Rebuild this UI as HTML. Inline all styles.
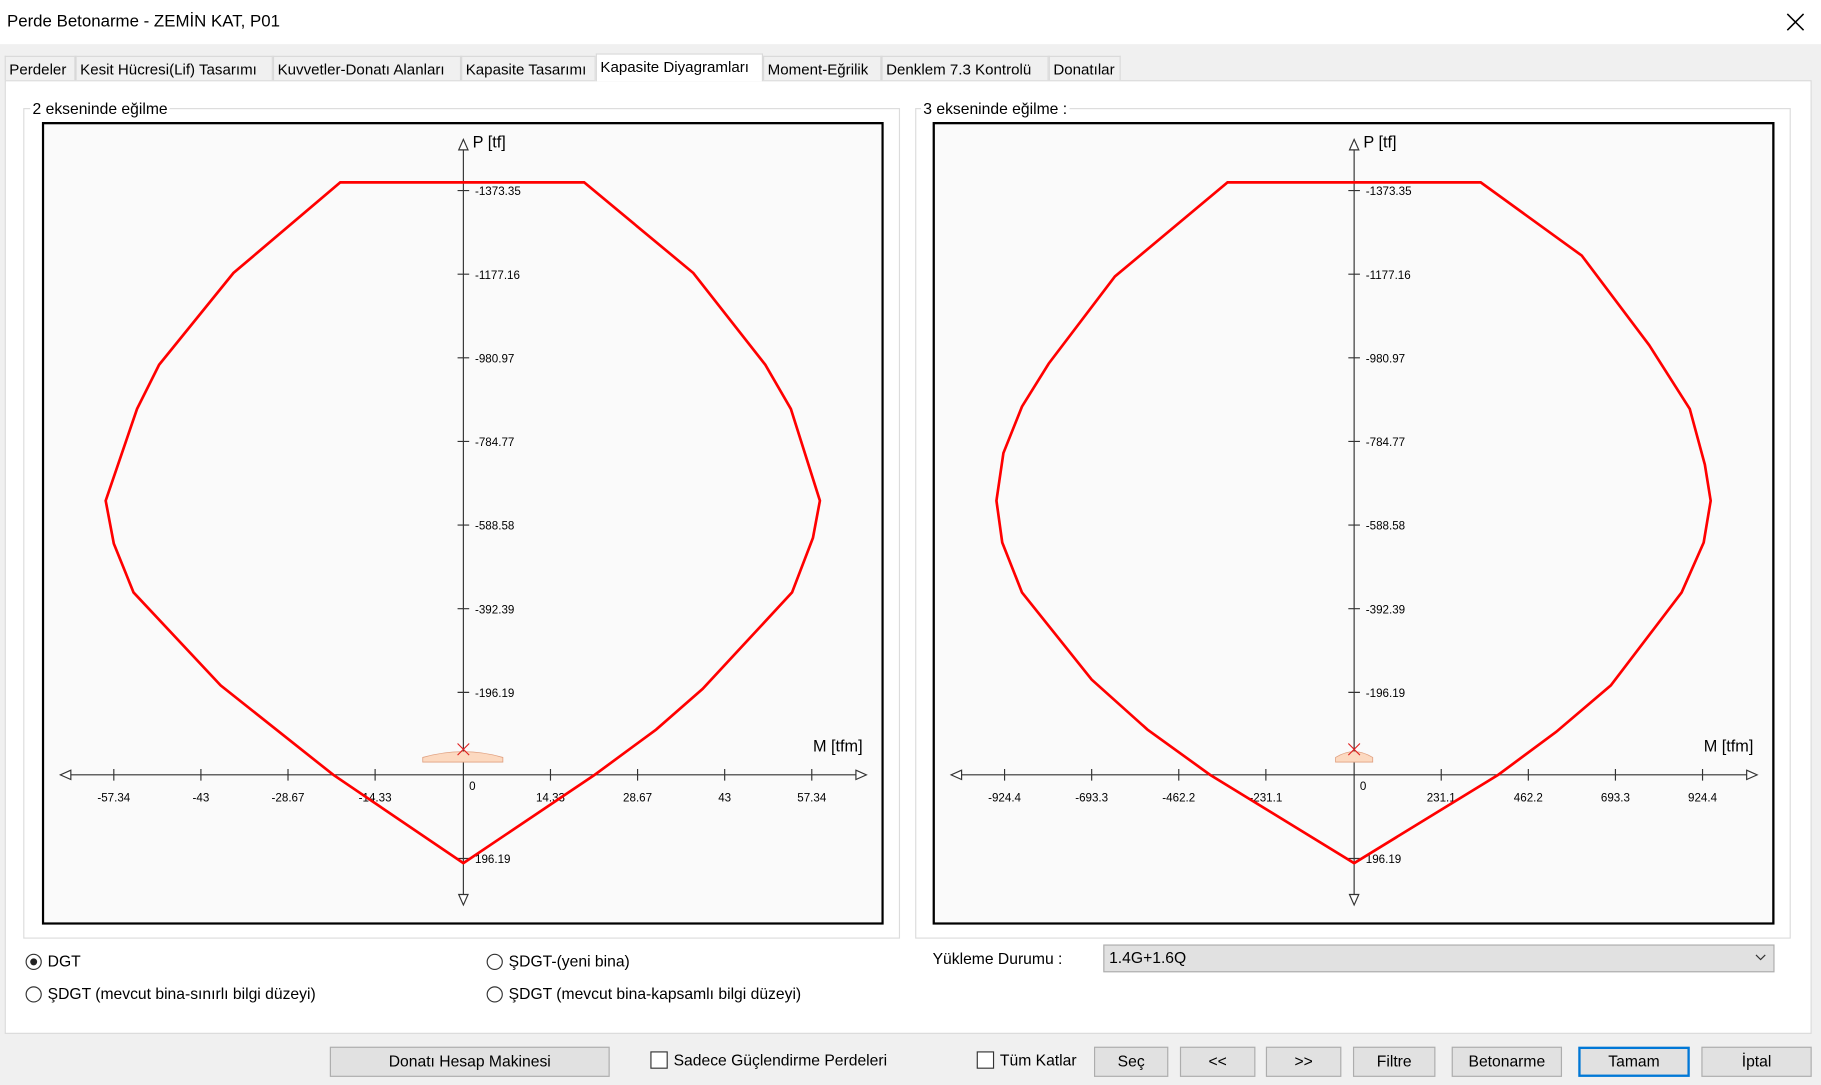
<!DOCTYPE html>
<html><head><meta charset="utf-8"><style>
html,body{margin:0;padding:0;width:1821px;height:1085px;overflow:hidden;background:#f0f0f0;}
#w{position:absolute;left:0;top:0;width:1568px;height:934px;transform:scale(1.16135,1.1617);transform-origin:0 0;font-family:"Liberation Sans",sans-serif;font-size:13.5px;color:#000;}
.a{position:absolute;}
.tab{position:absolute;top:48px;height:21px;border:1px solid #d9d9d9;border-bottom:none;background:#f0f0f0;font-size:13px;line-height:21px;padding:0 3px;box-sizing:border-box;white-space:nowrap;overflow:hidden;}
.btn{position:absolute;top:901px;height:26px;border:1px solid #adadad;background:#e1e1e1;box-sizing:border-box;text-align:center;line-height:24px;font-size:13.5px;}
.rad{position:absolute;width:14px;height:14px;border:1px solid #333;border-radius:50%;box-sizing:border-box;background:#fff;}
.chk{position:absolute;width:15px;height:15px;border:1px solid #333;box-sizing:border-box;background:#fff;}
.grp{position:absolute;border:1px solid #dcdcdc;}
</style></head><body><div id="w">
<div class="a" style="left:0;top:0;width:1568px;height:38px;background:#fff"></div>
<div class="a" style="left:6px;top:11px;font-size:14.5px">Perde Betonarme - ZEMİN KAT, P01</div>
<svg class="a" style="left:1538px;top:11px" width="16" height="16"><path d="M1 1L15 15M15 1L1 15" stroke="#000" stroke-width="1.3"/></svg>
<div class="a" style="left:4px;top:69px;width:1556px;height:821px;background:#fff;border:1px solid #d9d9d9;box-sizing:border-box"></div>
<div class="tab" style="left:4px;width:61px">Perdeler</div>
<div class="tab" style="left:65px;width:170px">Kesit Hücresi(Lif) Tasarımı</div>
<div class="tab" style="left:235px;width:162px">Kuvvetler-Donatı Alanları</div>
<div class="tab" style="left:397px;width:116px">Kapasite Tasarımı</div>
<div class="tab" style="left:513px;top:46px;height:24px;width:144px;background:#fff">Kapasite Diyagramları</div>
<div class="tab" style="left:657px;width:102px">Moment-Eğrilik</div>
<div class="tab" style="left:759px;width:144px">Denklem 7.3 Kontrolü</div>
<div class="tab" style="left:903px;width:62px">Donatılar</div>

<div class="grp" style="left:20px;top:93px;width:753px;height:713px"></div>
<div class="a" style="left:26px;top:86px;background:#fff;padding:0 2px">2 ekseninde eğilme</div>
<div class="grp" style="left:788px;top:93px;width:752px;height:713px"></div>
<div class="a" style="left:793px;top:86px;background:#fff;padding:0 2px">3 ekseninde eğilme :</div>

<svg class="a" style="left:36px;top:105px" width="725" height="691" viewBox="36 105 725 691" font-family="Liberation Sans,sans-serif" font-size="10">
<rect x="37" y="106" width="723" height="689" fill="#fafafa" stroke="#000" stroke-width="2"/>
<g stroke="#333" stroke-width="1" fill="none">
<path d="M399 120V776M52 667H745"/>
<path d="M395 129L399 120L403 129ZM395 770L399 779L403 770ZM61 663L52 667L61 671ZM737 663L746 667L737 671Z" fill="#fff"/>
<path d="M394 164H404M394 236H404M394 308H404M394 380H404M394 452H404M394 524H404M394 596H404M394 739H404"/>
<path d="M98 662V672M173 662V672M248 662V672M323 662V672M474 662V672M549 662V672M624 662V672M699 662V672"/>
</g>
<g fill="#000"><text x="409" y="168">-1373.35</text><text x="409" y="240">-1177.16</text><text x="409" y="312">-980.97</text><text x="409" y="384">-784.77</text><text x="409" y="456">-588.58</text><text x="409" y="528">-392.39</text><text x="409" y="600">-196.19</text><text x="409" y="743">196.19</text><text x="404" y="680">0</text>
<g text-anchor="middle"><text x="98" y="690">-57.34</text><text x="173" y="690">-43</text><text x="248" y="690">-28.67</text><text x="323" y="690">-14.33</text><text x="474" y="690">14.33</text><text x="549" y="690">28.67</text><text x="624" y="690">43</text><text x="699" y="690">57.34</text></g>
<text x="407" y="127" font-size="14">P [tf]</text><text x="700" y="647" font-size="14">M [tfm]</text></g>
<path d="M364 652Q399 642 433 652L433 656L364 656Z" fill="#fcd9c0" stroke="#e0a080" stroke-width="0.7"/>
<path d="M394 640L404 650M404 640L394 650" stroke="#e02020"/>
<path d="M293 157L503 157L597 235L659 314L681 352L706 431L700 463L682 510L605 593L565 628L512 667L399 743L287 667L190 590L115 510L98 468L91 431L118 352L137 314L201 235Z" fill="none" stroke="#f00" stroke-width="2.3"/>
</svg>

<svg class="a" style="left:803px;top:105px" width="725" height="691" viewBox="803 105 725 691" font-family="Liberation Sans,sans-serif" font-size="10">
<rect x="804" y="106" width="723" height="689" fill="#fafafa" stroke="#000" stroke-width="2"/>
<g stroke="#333" stroke-width="1" fill="none">
<path d="M1166 120V776M819 667H1512"/>
<path d="M1162 129L1166 120L1170 129ZM1162 770L1166 779L1170 770ZM828 663L819 667L828 671ZM1504 663L1513 667L1504 671Z" fill="#fff"/>
<path d="M1161 164H1171M1161 236H1171M1161 308H1171M1161 380H1171M1161 452H1171M1161 524H1171M1161 596H1171M1161 739H1171"/>
<path d="M865 662V672M940 662V672M1015 662V672M1090 662V672M1241 662V672M1316 662V672M1391 662V672M1466 662V672"/>
</g>
<g fill="#000"><text x="1176" y="168">-1373.35</text><text x="1176" y="240">-1177.16</text><text x="1176" y="312">-980.97</text><text x="1176" y="384">-784.77</text><text x="1176" y="456">-588.58</text><text x="1176" y="528">-392.39</text><text x="1176" y="600">-196.19</text><text x="1176" y="743">196.19</text><text x="1171" y="680">0</text>
<g text-anchor="middle"><text x="865" y="690">-924.4</text><text x="940" y="690">-693.3</text><text x="1015" y="690">-462.2</text><text x="1090" y="690">-231.1</text><text x="1241" y="690">231.1</text><text x="1316" y="690">462.2</text><text x="1391" y="690">693.3</text><text x="1466" y="690">924.4</text></g>
<text x="1174" y="127" font-size="14">P [tf]</text><text x="1467" y="647" font-size="14">M [tfm]</text></g>
<path d="M1150 652Q1166 642 1182 652L1182 656L1150 656Z" fill="#fcd9c0" stroke="#e0a080" stroke-width="0.7"/>
<path d="M1161 640L1171 650M1171 640L1161 650" stroke="#e02020"/>
<path d="M1057 157L1275 157L1362 220L1420 297L1455 352L1468 400L1473 431L1467 467L1448 510L1387 590L1340 630L1290 667L1166 743L1042 667L988 628L940 585L880 510L863 467L858 431L864 390L880 350L903 313L960 238Z" fill="none" stroke="#f00" stroke-width="2.3"/>
</svg>

<div class="rad" style="left:22px;top:821px"></div><div class="a" style="left:26px;top:825px;width:6px;height:6px;border-radius:50%;background:#222"></div>
<div class="a" style="left:41px;top:820px">DGT</div>
<div class="rad" style="left:22px;top:849px"></div><div class="a" style="left:41px;top:848px">ŞDGT (mevcut bina-sınırlı bilgi düzeyi)</div>
<div class="rad" style="left:419px;top:821px"></div><div class="a" style="left:438px;top:820px">ŞDGT-(yeni bina)</div>
<div class="rad" style="left:419px;top:849px"></div><div class="a" style="left:438px;top:848px">ŞDGT (mevcut bina-kapsamlı bilgi düzeyi)</div>
<div class="a" style="left:803px;top:818px">Yükleme Durumu :</div>
<div class="a" style="left:950px;top:813px;width:578px;height:24px;background:#e1e1e1;border:1px solid #adadad;box-sizing:border-box"></div>
<div class="a" style="left:955px;top:817px">1.4G+1.6Q</div>
<svg class="a" style="left:1511px;top:820px" width="10" height="8"><path d="M1 2L5 6L9 2" stroke="#333" fill="none"/></svg>

<div class="btn" style="left:284px;width:241px">Donatı Hesap Makinesi</div>
<div class="chk" style="left:560px;top:905px"></div><div class="a" style="left:580px;top:905px">Sadece Güçlendirme Perdeleri</div>
<div class="chk" style="left:841px;top:905px"></div><div class="a" style="left:861px;top:905px">Tüm Katlar</div>
<div class="btn" style="left:942px;width:64px">Seç</div>
<div class="btn" style="left:1016px;width:65px">&lt;&lt;</div>
<div class="btn" style="left:1090px;width:65px">&gt;&gt;</div>
<div class="btn" style="left:1165px;width:71px">Filtre</div>
<div class="btn" style="left:1250px;width:95px">Betonarme</div>
<div class="btn" style="left:1359px;width:96px;border:2px solid #0078d7;line-height:22px">Tamam</div>
<div class="btn" style="left:1465px;width:95px">İptal</div>
</div></body></html>
